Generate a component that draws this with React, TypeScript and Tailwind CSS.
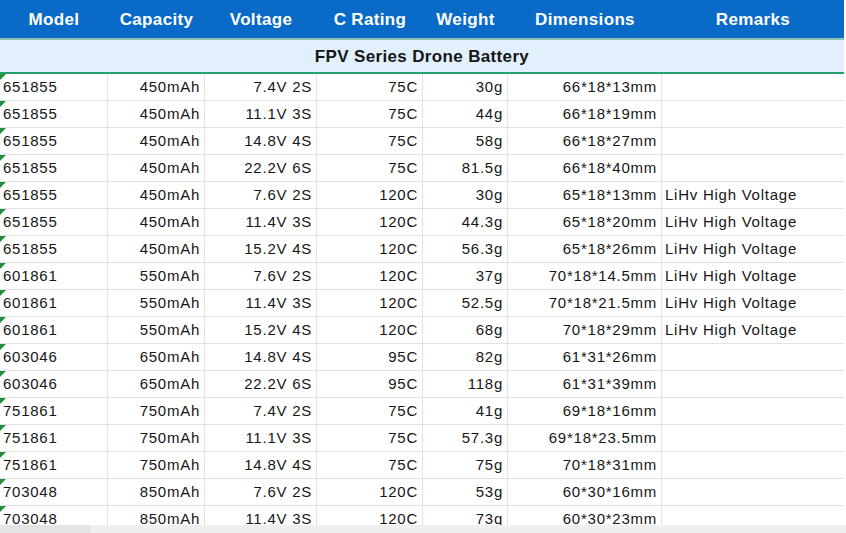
import React from "react";

type Row = [string, string, string, string, string, string, string];

const rows: Row[] = [
  ["651855", "450mAh", "7.4V 2S", "75C", "30g", "66*18*13mm", ""],
  ["651855", "450mAh", "11.1V 3S", "75C", "44g", "66*18*19mm", ""],
  ["651855", "450mAh", "14.8V 4S", "75C", "58g", "66*18*27mm", ""],
  ["651855", "450mAh", "22.2V 6S", "75C", "81.5g", "66*18*40mm", ""],
  ["651855", "450mAh", "7.6V 2S", "120C", "30g", "65*18*13mm", "LiHv High Voltage"],
  ["651855", "450mAh", "11.4V 3S", "120C", "44.3g", "65*18*20mm", "LiHv High Voltage"],
  ["651855", "450mAh", "15.2V 4S", "120C", "56.3g", "65*18*26mm", "LiHv High Voltage"],
  ["601861", "550mAh", "7.6V 2S", "120C", "37g", "70*18*14.5mm", "LiHv High Voltage"],
  ["601861", "550mAh", "11.4V 3S", "120C", "52.5g", "70*18*21.5mm", "LiHv High Voltage"],
  ["601861", "550mAh", "15.2V 4S", "120C", "68g", "70*18*29mm", "LiHv High Voltage"],
  ["603046", "650mAh", "14.8V 4S", "95C", "82g", "61*31*26mm", ""],
  ["603046", "650mAh", "22.2V 6S", "95C", "118g", "61*31*39mm", ""],
  ["751861", "750mAh", "7.4V 2S", "75C", "41g", "69*18*16mm", ""],
  ["751861", "750mAh", "11.1V 3S", "75C", "57.3g", "69*18*23.5mm", ""],
  ["751861", "750mAh", "14.8V 4S", "75C", "75g", "70*18*31mm", ""],
  ["703048", "850mAh", "7.6V 2S", "120C", "53g", "60*30*16mm", ""],
  ["703048", "850mAh", "11.4V 3S", "120C", "73g", "60*30*23mm", ""],
];

const headers = ["Model", "Capacity", "Voltage", "C Rating", "Weight", "Dimensions", "Remarks"];
const widths = ["w-[108px]", "w-[97px]", "w-[112px]", "w-[106px]", "w-[85px]", "w-[154px]", "w-[182px]"];

export default function App() {
  return (
    <div className="flex h-[533px] w-[846px] flex-col overflow-hidden bg-white font-['Liberation_Sans',Arial,sans-serif] text-[#161616]">
      <div className="flex-1 overflow-hidden">
        <div className="w-[844px]">
          {/* header */}
          <div className="flex h-[38px] items-center bg-[#0a6ac8] pt-[1px] text-[17px] font-bold tracking-[0.35px] text-white">
            {headers.map((h, i) => (
              <div key={h} className={`${widths[i]} text-center`}>
                {h}
              </div>
            ))}
          </div>
          <div className="h-[2px] bg-[#8cc4b4]" />
          <div className="flex h-[32px] items-center justify-center bg-[#e1f0fc] pt-[1px] text-[17px] font-bold tracking-[0.35px]">
            FPV Series Drone Battery
          </div>
          <div className="h-[2px] bg-[#24a06a]" />
          {/* rows */}
          {rows.map((r, ri) => (
            <div key={ri} className="flex h-[27px] border-b border-[#e2e2e2] text-[15px] tracking-[0.75px]">
              {r.map((c, ci) => (
                <div
                  key={ci}
                  className={`${widths[ci]} relative flex items-center border-r border-[#e2e2e2] last:border-r-0 ${
                    ci === 0 || ci === 6 ? "justify-start pl-[3px]" : "justify-end pr-[4px]"
                  }`}
                >
                  {ci === 0 && (
                    <span className="absolute left-0 top-0 h-0 w-0 border-r-[6px] border-t-[6px] border-r-transparent border-t-[#1f8f3c]" />
                  )}
                  {c}
                </div>
              ))}
            </div>
          ))}
        </div>
      </div>
      <div className="flex h-[8px] w-[846px]">
        <div className="w-[90px] bg-[#e4e4e4]" />
        <div className="flex-1 bg-[#efefef]" />
      </div>
    </div>
  );
}
